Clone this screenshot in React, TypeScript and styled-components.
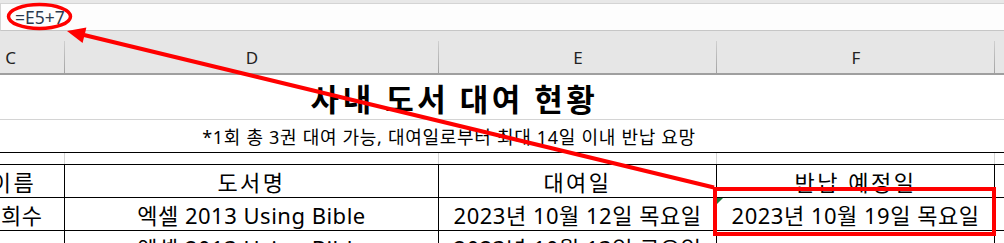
import React from "react";
import styled, { createGlobalStyle } from "styled-components";

const GlobalStyle = createGlobalStyle`
  html, body { margin: 0; padding: 0; background: #ffffff; }
  body { font-family: "Noto Sans", "Noto Sans CJK KR", sans-serif; }
`;

const Frame = styled.div`
  position: relative;
  width: 1004px;
  height: 243px;
  overflow: hidden;
  background: #ffffff;
`;

const FormulaStrip = styled.div`
  display: flex;
  height: 31px;
  padding-top: 3px;
  box-sizing: border-box;
  background: #e8e8e8;
`;

const FormulaInput = styled.div`
  flex: 1;
  display: flex;
  align-items: center;
  height: 28px;
  box-sizing: border-box;
  padding-left: 14px;
  background: #fdfdfd;
  border-top: 1px solid #d4d4d4;
  border-left: 1px solid #d4d4d4;
  border-bottom: 1px solid #c6c6c6;
  font-family: "Noto Sans", sans-serif;
  font-size: 17.5px;
  color: #2b3a4f;
`;

const ColumnHeaderRow = styled.div`
  display: flex;
  height: 44px;
  box-sizing: border-box;
  margin-left: -44px;
  background: #e6e6e6;
  border-bottom: 2px solid #9f9f9f;
`;

const ColHead = styled.div<{ $w: number }>`
  position: relative;
  flex: 0 0 ${(p) => p.$w}px;
  display: flex;
  align-items: center;
  justify-content: center;
  padding-top: 10px;
  box-sizing: border-box;
  font-family: "Noto Sans", sans-serif;
  font-size: 17px;
  color: #222222;

  &::after {
    content: "";
    position: absolute;
    right: 0;
    top: 10px;
    bottom: 0;
    width: 1px;
    background: linear-gradient(#cfcfcf, #a3a3a3);
  }
`;

const TitleRow = styled.div`
  display: flex;
  align-items: center;
  justify-content: center;
  height: 45px;
  box-sizing: border-box;
  padding-right: 95px;
  border-bottom: 1px solid #d4d4d4;
  font-family: "Noto Sans CJK KR", sans-serif;
  font-weight: 700;
  font-size: 31px;
  letter-spacing: 3.5px;
  color: #000000;
`;

const SubtitleRow = styled.div`
  display: flex;
  align-items: center;
  justify-content: center;
  height: 33px;
  box-sizing: border-box;
  padding-right: 106px;
  border-bottom: 1px solid #000000;
  font-family: "Noto Sans", "Noto Sans CJK KR", sans-serif;
  font-size: 18px;
  letter-spacing: 0.7px;
  color: #000000;
`;

const GridRow = styled.div<{ $h: number; $top?: boolean; $ruled?: boolean }>`
  display: flex;
  height: ${(p) => p.$h}px;
  box-sizing: border-box;
  margin-left: -44px;
  border-top: ${(p) => (p.$top ? "1px solid #000000" : "none")};
  border-bottom: ${(p) => (p.$ruled ? "1px solid #000000" : "none")};
`;

const Cell = styled.div<{ $w: number; $light?: boolean; $flag?: boolean; $track?: number; $lead?: number }>`
  position: relative;
  flex: 0 0 ${(p) => p.$w}px;
  display: flex;
  align-items: center;
  justify-content: center;
  box-sizing: border-box;
  padding-left: ${(p) => p.$lead ?? 0}px;
  border-right: 1px solid ${(p) => (p.$light ? "#d4d4d4" : "#000000")};
  font-family: "Noto Sans", "Noto Sans CJK KR", sans-serif;
  font-size: 22px;
  letter-spacing: ${(p) => p.$track ?? 0.5}px;
  color: #000000;
  white-space: nowrap;

  &::before {
    content: "";
    display: ${(p) => (p.$flag ? "block" : "none")};
    position: absolute;
    left: 0;
    top: 0;
    width: 0;
    height: 0;
    border-top: 6px solid #1f7a3c;
    border-right: 6px solid transparent;
  }
`;

const Overlay = styled.svg`
  position: absolute;
  left: 0;
  top: 0;
  pointer-events: none;
`;

const colWidths = [109, 374, 278, 278, 120];

const rows = [
  { h: 34, top: true, track: 2.5, cells: ["이름", "도서명", "대여일", "반납 예정일", ""] },
  { h: 33, top: false, track: 0.5, cells: ["김희수", "엑셀 2013 Using Bible", "2023년 10월 12일 목요일", "2023년 10월 19일 목요일", ""] },
  { h: 33, top: false, track: 0.5, cells: ["", "엑셀 2013 Using Bible", "2023년 10월 13일 금요일", "", ""] },
];

export default function App() {
  return (
    <Frame>
      <GlobalStyle />
      <FormulaStrip>
        <FormulaInput>=E5+7</FormulaInput>
      </FormulaStrip>
      <ColumnHeaderRow>
        {["C", "D", "E", "F", ""].map((l, i) => (
          <ColHead key={i} $w={colWidths[i]}>
            {l}
          </ColHead>
        ))}
      </ColumnHeaderRow>
      <TitleRow>사내 도서 대여 현황</TitleRow>
      <SubtitleRow>*1회 총 3권 대여 가능, 대여일로부터 최대 14일 이내 반납 요망</SubtitleRow>
      <GridRow $h={11}>
        {colWidths.map((w, i) => (
          <Cell key={i} $w={w} $light />
        ))}
      </GridRow>
      {rows.map((r, ri) => (
        <GridRow key={ri} $h={r.h} $top={r.top} $ruled>
          {r.cells.map((c, ci) => (
            <Cell
              key={ci}
              $w={colWidths[ci]}
              $track={r.track}
              $lead={ci === 0 ? (ri === 0 ? 7 : 3) : 0}
              $flag={ri === 1 && ci === 3}
            >
              {c}
            </Cell>
          ))}
        </GridRow>
      ))}
      <Overlay width={1004} height={243} viewBox="0 0 1004 243">
        <ellipse cx={39.5} cy={16.5} rx={31} ry={12} fill="none" stroke="#ff0000" strokeWidth={3.5} />
        <line x1={714} y1={187.5} x2={84} y2={35} stroke="#ff0000" strokeWidth={4} />
        <polygon points="67,31 82.6,43 86.4,27.4" fill="#ff0000" />
        <rect x={715} y={189} width={279} height={45} fill="none" stroke="#ff0000" strokeWidth={4} />
      </Overlay>
    </Frame>
  );
}
